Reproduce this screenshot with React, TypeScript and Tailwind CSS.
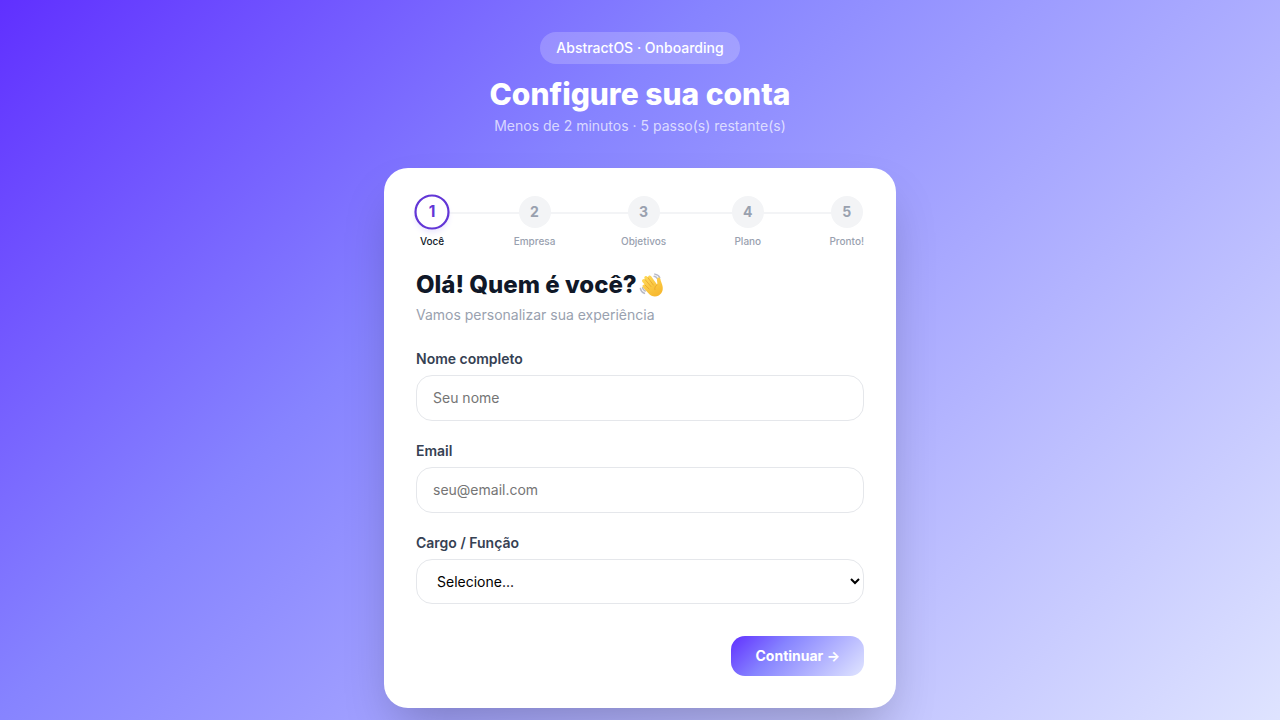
import { Fragment, useState } from "react";

const STEPS = ["Você", "Empresa", "Objetivos", "Plano", "Pronto!"];
const ROLES = ["CEO / Fundador", "Gerente", "Desenvolvedor", "Designer", "Outro"];

interface StepperProps {
  current: number;
}

const Stepper: React.FC<StepperProps> = ({ current }) => {
  return (
    <div className="flex items-start">
      {STEPS.map((label, i) => (
        <Fragment key={label}>
          {i > 0 && <div className="mt-4 -mx-2 h-0.5 flex-1 bg-gray-100" />}
          <div className="z-10 flex flex-col items-center">
            <div
              className={`flex size-8 items-center justify-center rounded-full text-sm font-bold ${
                i === current
                  ? "scale-110 border-2 border-[#6236d6] bg-white text-[#6236d6] shadow-md shadow-violet-100"
                  : "bg-gray-100 text-gray-400"
              }`}
            >
              {i + 1}
            </div>
            <span className={`mt-1.5 text-[10px] leading-[15px] font-medium ${i === current ? "text-gray-900" : "text-gray-400"}`}>
              {label}
            </span>
          </div>
        </Fragment>
      ))}
    </div>
  );
}

const WavingHand: React.FC = () => {
  return (
    <svg viewBox="0 0 36 36" className="size-[26px]" role="img" aria-label="Mão acenando">
      <defs>
        <linearGradient id="skin" x1="0" y1="0" x2="0.6" y2="1">
          <stop offset="0" stopColor="#ffdc5a" />
          <stop offset="1" stopColor="#f7b930" />
        </linearGradient>
      </defs>
      <g fill="none" stroke="#b9bac6" strokeWidth="2.2" strokeLinecap="round">
        <path d="M22 3c3 .3 5.400 2 6.600 4.600M21 6c2 .4 3.600 1.500 4.500 3.200" />
        <path d="M2 23c.6 3 2.600 5.400 5.500 6.500M5 22c.5 2 1.800 3.500 3.600 4.300" />
      </g>
      <path
        d="M5 10.500c1-1 2.500-.9 3.500.1l-.8-1.400C7 8 7.300 6.700 8.400 6c1.100-.7 2.500-.4 3.300.7l.9 1.200c-.4-1 0-2.200 1-2.800 1.100-.6 2.400-.3 3.200.8l8.400 11.800c.3-1.800.2-3.600-.2-5.400-.5-2.300.1-4.200 1.800-4.600 1.600-.4 2.700.8 3 2.700.3 2.200 1.300 4.200 2.200 6.800 2.200 6.300.4 12.300-4.600 15.200-5.200 3-10.300 1.400-14.400-3L5.600 21.500c-1-1.100-1-2.500-.1-3.400.7-.7 1.700-.8 2.600-.3l-3.300-3.900C3.900 12.700 4 11.400 5 10.500z"
        fill="url(#skin)"
      />
      <path
        d="M8.500 10.600l8.100 9.600M12.400 7.900l7.500 10.200M8.100 17.800l5.900 5.700M25.200 17.700c-2.600 1.200-3.800 3.800-3.200 6.800"
        fill="none"
        stroke="#e09a2a"
        strokeWidth="0.9"
        strokeLinecap="round"
      />
    </svg>
  );
}

interface FieldProps {
  id: string;
  label: string;
  type: string;
  placeholder: string;
  value: string;
  setValue: (val: string) => void;
}

const Field: React.FC<FieldProps> = ({ id, label, type, placeholder, value, setValue }) => {
  return (
    <div>
      <label htmlFor={id} className="mb-1.5 block text-sm font-semibold text-gray-700">{label}</label>
      <input
        id={id}
        type={type}
        placeholder={placeholder}
        value={value}
        onChange={(e) => setValue(e.target.value)}
        className="block w-full rounded-2xl border border-gray-200 px-4 py-3 text-sm text-black placeholder:text-[#757575] focus:outline-2 focus:outline-[#6236d6]"
      />
    </div>
  );
}

const App: React.FC = () => {
  const [name, setName] = useState<string>("");
  const [email, setEmail] = useState<string>("");
  const [role, setRole] = useState<string>("");

  return (
    <div className="flex min-h-screen flex-col items-center bg-[linear-gradient(135deg,#6030ff_0%,#8683ff_35%,#e0e5ff_100%)] px-4 py-8 font-['Inter','Liberation_Sans',sans-serif]">
      <header className="mb-8 flex flex-col items-center text-center">
        <span className="mb-3 rounded-full bg-white/20 px-4 py-1.5 text-sm font-medium text-white">AbstractOS · Onboarding</span>
        <h1 className="text-3xl font-extrabold text-white">Configure sua conta</h1>
        <p className="mt-1 text-sm text-white/70">Menos de 2 minutos · 5 passo(s) restante(s)</p>
      </header>

      <main className="w-full max-w-lg rounded-3xl bg-white px-8 pt-7 pb-8 shadow-2xl">
        <Stepper current={0} />

        <h2 className="mt-5 flex items-center gap-0.5 text-2xl font-extrabold text-gray-900">
          Olá! Quem é você? <WavingHand />
        </h2>
        <p className="mt-1 text-sm text-gray-400">Vamos personalizar sua experiência</p>

        <form className="mt-6" onSubmit={(e) => e.preventDefault()}>
          <div className="flex flex-col gap-5">
            <Field id="name" label="Nome completo" type="text" placeholder="Seu nome" value={name} setValue={setName} />
            <Field id="email" label="Email" type="email" placeholder="seu@email.com" value={email} setValue={setEmail} />
            <div>
              <label htmlFor="role" className="mb-1.5 block text-sm font-semibold text-gray-700">Cargo / Função</label>
              <select
                id="role"
                value={role}
                onChange={(e) => setRole(e.target.value)}
                className="block w-full rounded-2xl border border-gray-200 bg-white px-4 py-3 text-sm text-black focus:outline-2 focus:outline-[#6236d6]"
              >
                <option value="">Selecione...</option>
                {ROLES.map((r) => (
                  <option key={r} value={r}>{r}</option>
                ))}
              </select>
            </div>
          </div>

          <div className="mt-8 flex justify-end">
            <button
              type="submit"
              className="rounded-[14px] bg-[linear-gradient(135deg,#6030ff_0%,#8683ff_35%,#e0e5ff_100%)] px-6 py-2.5 text-sm font-bold text-white transition hover:cursor-pointer hover:opacity-90"
            >
              Continuar →
            </button>
          </div>
        </form>
      </main>
    </div>
  );
}

export default App;
